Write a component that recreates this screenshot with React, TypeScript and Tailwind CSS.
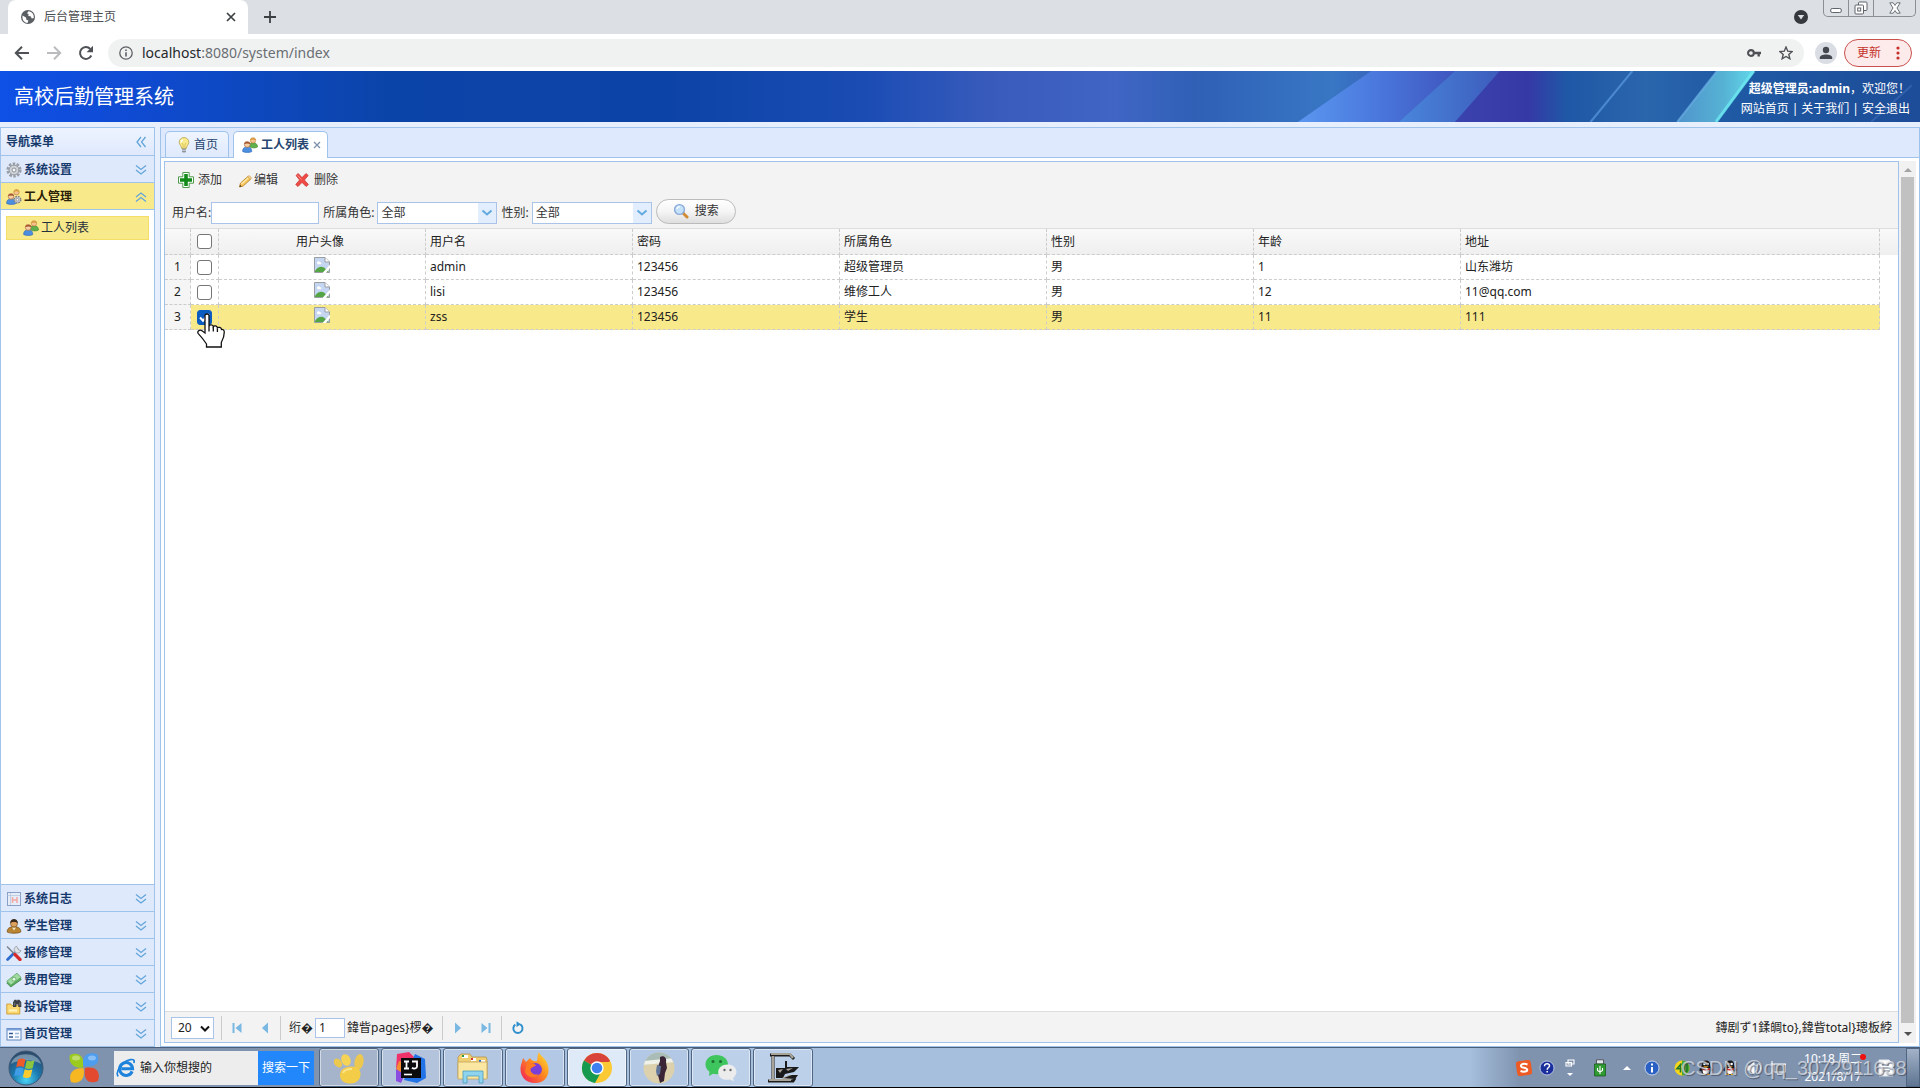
import type { ReactNode } from "react";
import clsx from "clsx";

type IconProps = {
  className?: string;
};

/* ---------- small 16px icons ---------- */

function GlobeIcon({ className }: IconProps) {
  return (
    <svg viewBox="0 0 16 16" className={clsx("h-4 w-4 shrink-0", className)}>
      <circle cx="8" cy="8" r="7" fill="#5b5f64" />
      <path d="M2.5 6.5 6 8.6l.4 2.2 2 .8-.9 2.4C4 13.5 2 11 2.5 6.5Z" fill="#fff" />
      <path d="M8.5 2.2 7 4.2l1.6.8-.3 1.9 2.3.4 1.2 2.1 2-.5C14 5 12 2.5 8.5 2.2Z" fill="#fff" />
    </svg>
  );
}

function BulbIcon({ className }: IconProps) {
  return (
    <svg viewBox="0 0 16 16" className={clsx("h-4 w-4 shrink-0", className)}>
      <path d="M8 .5a4.8 4.8 0 0 0-4.800 4.800c0 2.400 2.300 3.600 2.500 6.200h4.600c.2-2.600 2.500-3.800 2.500-6.200A4.800 4.800 0 0 0 8 .5Z" fill="#f8ea8a" stroke="#b9a54a" strokeWidth=".8" />
      <path d="M7 3c-1.400.3-2 1.200-2 2.500" stroke="#fff" fill="none" strokeWidth="1.300" />
      <path d="M7 11V7.500L6 6M9 11V7.500l1-1.500" stroke="#d2b94c" fill="none" strokeWidth=".8" />
      <rect x="6" y="11.5" width="4" height="4" rx="1" fill="#8f979f" />
      <path d="M6 13.200h4" stroke="#dfe3e8" strokeWidth=".8" />
    </svg>
  );
}

function UsersIcon({ className }: IconProps) {
  return (
    <svg viewBox="0 0 16 16" className={clsx("h-4 w-4 shrink-0", className)}>
      <path d="M6.800 9.300c0-2.400 1.600-3.600 4.200-3.600s4.500 1.200 4.500 4.300c-1.500 1.200-6 1.500-8.700-.7Z" fill="#5fb04a" stroke="#3f8a31" strokeWidth=".6" />
      <circle cx="11" cy="3.400" r="2.700" fill="#f3c28e" stroke="#b67a35" strokeWidth=".6" />
      <path d="M8.200 3.200C8.500.7 13.500.5 13.800 3.200 12.500 2.300 9.800 2.400 8.200 3.200Z" fill="#d9952f" />
      <path d="M.6 14.500c0-3.200 1.500-4.600 4.600-4.600s4.600 1.400 4.600 4.600c-1.500 1.300-7.200 1.300-9.200 0Z" fill="#4c8fe0" stroke="#2b64b4" strokeWidth=".6" />
      <circle cx="5.200" cy="7.400" r="2.900" fill="#f6cfa4" stroke="#a25f35" strokeWidth=".6" />
      <path d="M2.200 7.200c.2-3 5.800-3.200 6 0C6.800 6.200 3.800 6.200 2.200 7.200Z" fill="#a4532b" />
    </svg>
  );
}

function UsersGearIcon({ className }: IconProps) {
  return (
    <svg viewBox="0 0 16 16" className={clsx("h-4 w-4 shrink-0", className)}>
      <circle cx="10.500" cy="3.200" r="2.700" fill="#f3c28e" stroke="#b67a35" strokeWidth=".6" />
      <path d="M7.700 3C8 .5 13 .3 13.300 3 12 2.100 9.300 2.200 7.700 3Z" fill="#e0a132" />
      <path d="M.6 14.500c0-3.200 1.500-4.600 4.600-4.600s4.600 1.400 4.600 4.600c-1.500 1.300-7.200 1.300-9.200 0Z" fill="#4c8fe0" stroke="#2b64b4" strokeWidth=".6" />
      <circle cx="5" cy="7.400" r="2.800" fill="#f6cfa4" stroke="#a25f35" strokeWidth=".6" />
      <path d="M2.200 7.200c.2-3 5.600-3.200 5.800 0-1.500-1-4.300-1-5.800 0Z" fill="#a4532b" />
      <circle cx="11.500" cy="10.700" r="3.300" fill="#c3c7cc" stroke="#7d8288" strokeWidth="1.400" strokeDasharray="1.600 1" />
      <circle cx="11.500" cy="10.700" r="1.200" fill="#fff" stroke="#7d8288" strokeWidth=".6" />
    </svg>
  );
}

function GearIcon({ className }: IconProps) {
  return (
    <svg viewBox="0 0 16 16" className={clsx("h-4 w-4 shrink-0", className)}>
      <circle cx="8" cy="8" r="6.300" fill="none" stroke="#9a9fa6" strokeWidth="2.600" strokeDasharray="2.500 1.450" />
      <circle cx="8" cy="8" r="4.900" fill="#d0d3d8" stroke="#93989f" strokeWidth="1" />
      <circle cx="8" cy="8" r="2" fill="#f5f7fa" stroke="#8f949a" strokeWidth="1" />
    </svg>
  );
}

function LogIcon({ className }: IconProps) {
  return (
    <svg viewBox="0 0 16 16" className={clsx("h-4 w-4 shrink-0", className)}>
      <rect x="1.500" y="1.500" width="13" height="13" fill="#e6edf9" stroke="#8a9fc8" />
      <path d="M1.500 4.500h13M4.500 2v12" stroke="#b8c6e0" strokeWidth=".8" />
      <path d="M6.500 6v6M11 6v6M6.500 9H11" stroke="#f3a8a2" strokeWidth="1.500" />
    </svg>
  );
}

function StudentIcon({ className }: IconProps) {
  return (
    <svg viewBox="0 0 16 16" className={clsx("h-4 w-4 shrink-0", className)}>
      <path d="M1.200 14c0-3.800 2.300-5.200 6.800-5.200s6.800 1.400 6.800 5.200c-2.500 1.600-11 1.600-13.600 0Z" fill="#b98532" stroke="#7c531a" strokeWidth=".8" />
      <path d="m6 9.500 2 3 2-3Z" fill="#f4e5c5" />
      <circle cx="8" cy="5.600" r="3.500" fill="#dda15e" stroke="#5f3b16" strokeWidth=".6" />
      <path d="M4.200 5.300C3.800-.4 12.200-.4 11.800 5.300 10 3.500 6 3.500 4.200 5.300Z" fill="#3a2a1c" />
    </svg>
  );
}

function ToolsIcon({ className }: IconProps) {
  return (
    <svg viewBox="0 0 16 16" className={clsx("h-4 w-4 shrink-0", className)}>
      <path d="M12.500 3.500 7 9" stroke="#a8adb5" strokeWidth="2" />
      <path d="M10.600 1.200a3.500 3.500 0 1 0 4.400 4.400L12.800 5l-1.200-1.500Z" fill="#dfe3e8" stroke="#8b9199" strokeWidth=".7" />
      <path d="m1.600 14.400 6-6" stroke="#2d6bd0" strokeWidth="2.800" strokeLinecap="round" />
      <path d="m1 1.500 7.500 7.500" stroke="#7c838c" strokeWidth="1.500" />
      <path d="m9 9.500 5 5" stroke="#d92b2b" strokeWidth="3.200" strokeLinecap="round" />
    </svg>
  );
}

function MoneyIcon({ className }: IconProps) {
  return (
    <svg viewBox="0 0 16 16" className={clsx("h-4 w-4 shrink-0", className)}>
      <path d="m.8 11 4 4 10.500-7.500L11.500 3Z" fill="#5cae60" stroke="#34803a" strokeWidth=".7" />
      <path d="m.8 9.200 4 4 10.200-7.800-4-4.200Z" fill="#a2dba2" stroke="#4b9b4f" strokeWidth=".7" />
      <circle cx="8" cy="7.200" r="2" fill="#e2f6df" stroke="#4b9b4f" strokeWidth=".7" />
    </svg>
  );
}

function FolderFindIcon({ className }: IconProps) {
  return (
    <svg viewBox="0 0 16 16" className={clsx("h-4 w-4 shrink-0", className)}>
      <path d="M.8 5h4l1 1.500h8V15H.8Z" fill="#fbd870" stroke="#c79323" strokeWidth=".8" />
      <path d="M3 10.500h8v2H3Z" fill="#fff3c0" />
      <path d="M7 8V3.200L8.500.8h2l.5 1.500.4-1.500h2l1.900 2.400V8h-3V5.500h-2V8Z" fill="#3c3f45" />
      <path d="M8.700 3.500v3M13.800 3.500v3" stroke="#8c9199" strokeWidth=".7" />
    </svg>
  );
}

function PageFormIcon({ className }: IconProps) {
  return (
    <svg viewBox="0 0 16 16" className={clsx("h-4 w-4 shrink-0", className)}>
      <rect x="1" y="2.500" width="14" height="11.500" fill="#f7faff" stroke="#5f86bd" />
      <path d="M1 3.500h14" stroke="#7aa1d8" strokeWidth="2" />
      <path d="M3 7.500h4M3 11h4" stroke="#34598f" strokeWidth="1.400" />
      <path d="M9 7.500h4M9 11h4" stroke="#9bb4d6" strokeWidth="1.400" />
    </svg>
  );
}

function AddIcon({ className }: IconProps) {
  return (
    <svg viewBox="0 0 16 16" className={clsx("h-4 w-4 shrink-0", className)}>
      <path d="M4.800.5h6.400v4.300h4.300v6.400h-4.300v4.300H4.800v-4.300H.5V4.800h4.300Z" fill="#fff" stroke="#4f9a4b" strokeLinejoin="round" />
      <path d="M6.200 2h3.600v4.200H14v3.600H9.800V14H6.200V9.800H2V6.200h4.200Z" fill="#118a18" />
    </svg>
  );
}

function PencilIcon({ className }: IconProps) {
  return (
    <svg viewBox="0 0 16 16" className={clsx("h-4 w-4 shrink-0", className)}>
      <path d="m1.500 15 1-4L9.600 4.700c1.500-.8 3.600 1.200 2.800 2.800L5.200 14Z" fill="#f7c65b" stroke="#b87e25" strokeWidth=".8" />
      <path d="M3.500 12 10.300 5.800" stroke="#fdeab0" strokeWidth="1.200" />
      <path d="m9.700 4.600 2.900 2.800.6-1.200c.2-1.200-1.300-2.500-2.500-2.400Z" fill="#f5dba2" stroke="#b87e25" strokeWidth=".5" />
      <path d="m1.500 15 .6-2.200 1.500 1.600Z" fill="#4d3a1f" />
    </svg>
  );
}

function RemoveIcon({ className }: IconProps) {
  return (
    <svg viewBox="0 0 16 16" className={clsx("h-4 w-4 shrink-0", className)}>
      <path d="m2 3.500 2.200-2L8 5.600l4-4.100 2.200 2L10.400 8l4 4.500-2.300 2L8 10.400l-4 4.100-2.300-2L5.600 8Z" fill="#ee4b46" stroke="#c9312d" strokeWidth=".7" />
      <path d="m3.500 3.400 3.800 4" stroke="#ff9d97" strokeWidth=".9" />
    </svg>
  );
}

function SearchIcon({ className }: IconProps) {
  return (
    <svg viewBox="0 0 16 16" className={clsx("h-4 w-4 shrink-0", className)}>
      <path d="m10 10 4 4" stroke="#d18b34" strokeWidth="3" strokeLinecap="round" />
      <circle cx="6.500" cy="6.500" r="4.900" fill="#c4e2fa" stroke="#8ba9d8" strokeWidth="1.400" />
      <path d="M4 6c.3-1.600 1.300-2.400 2.700-2.400" stroke="#fff" strokeWidth="1.300" fill="none" />
    </svg>
  );
}

function BrokenImageIcon({ className }: IconProps) {
  return (
    <svg viewBox="0 0 16 16" className={clsx("h-4 w-4 shrink-0", className)}>
      <path d="M.5.500h10.500l4.500 4.500v10.500H.5Z" fill="#c5d6f2" />
      <path d="M3 6c0-2 2.600-2.200 3-.7 1.600-.2 2 1.600.6 2H3.500Z" fill="#fff" />
      <path d="M1 15v-1c2.500-4 6-5 9-3.500L15 15Z" fill="#54a545" />
      <path d="M.5.5h10.500l4.500 4.500v10.500H.5Z" fill="none" stroke="#9a9da1" />
      <path d="M11 .5V5h4.500" fill="#fff" stroke="#9a9da1" />
      <path d="M8.500 16 16 7.500V11l-4 5Z" fill="#fff" />
    </svg>
  );
}

function DoubleChevron({ className }: IconProps) {
  return (
    <svg viewBox="0 0 12 12" fill="none" stroke="#62a5da" strokeWidth="1.300" className={clsx("h-3 w-3 shrink-0", className)}>
      <path d="m1 1.500 5 4 5-4M1 6l5 4 5-4" />
    </svg>
  );
}

/* ---------- browser chrome ---------- */

function WindowButtons() {
  return (
    <div className="flex h-[17px] self-start rounded-b-[5px] border border-t-0 border-[#8b8f94]">
      <button aria-label="最小化" className="grid w-[25px] place-items-center border-r border-[#8b8f94]">
        <svg viewBox="0 0 12 12" className="h-3 w-3">
          <rect x=".7" y="6.500" width="10.600" height="4" rx="1.500" fill="#fff" stroke="#5f646a" />
        </svg>
      </button>
      <button aria-label="还原" className="grid w-[25px] place-items-center border-r border-[#8b8f94]">
        <svg viewBox="0 0 14 14" className="h-3.5 w-3.5" fill="#fff" stroke="#5f646a">
          <rect x="4.500" y="1" width="8.500" height="8.500" rx="1" />
          <rect x="1" y="4" width="8.500" height="9" rx="1" />
          <rect x="3.700" y="7" width="3" height="3" />
        </svg>
      </button>
      <button aria-label="关闭窗口" className="grid w-[41px] place-items-center">
        <svg viewBox="0 0 12 12" className="h-3 w-3">
          <path d="M.8.8h3.400L6 3.400 7.800.8h3.400L8 6l3.200 5.200H7.800L6 8.600l-1.800 2.600H.8L4 6Z" fill="#fff" stroke="#5f646a" strokeWidth=".9" />
        </svg>
      </button>
    </div>
  );
}

function TabStrip() {
  return (
    <div className="flex h-[34px] shrink-0 bg-[#dcdfe4] pl-2 pr-1">
      <div className="flex w-60 items-center rounded-t-lg bg-white px-3">
        <GlobeIcon />
        <span className="ml-2 flex-1 text-xs leading-4 text-[#4a4d51]">后台管理主页</span>
        <button aria-label="关闭标签页">
          <svg viewBox="0 0 10 10" className="h-2.5 w-2.5" stroke="#3c4043" strokeWidth="1.700">
            <path d="m1 1 8 8M9 1 1 9" />
          </svg>
        </button>
      </div>
      <button aria-label="新标签页" className="ml-4">
        <svg viewBox="0 0 12 12" className="h-3 w-3" stroke="#3c4043" strokeWidth="1.800">
          <path d="M6 0v12M0 6h12" />
        </svg>
      </button>
      <div className="flex-1" />
      <button aria-label="搜索标签页" className="mr-[15px]">
        <svg viewBox="0 0 14 14" className="h-3.5 w-3.5">
          <circle cx="7" cy="7" r="7" fill="#35383c" />
          <path d="M3.800 5h6.400L7 9.600Z" fill="#dcdfe4" />
        </svg>
      </button>
      <WindowButtons />
    </div>
  );
}

function Toolbar() {
  return (
    <div className="flex h-[37px] shrink-0 items-center bg-white pl-3.5 pr-2">
      <button aria-label="后退" className="mr-4">
        <svg viewBox="0 0 16 16" className="h-4 w-4" fill="none" stroke="#4e5256" strokeWidth="2">
          <path d="M15 8H2.500M8 1.800 1.800 8 8 14.200" />
        </svg>
      </button>
      <button aria-label="前进" className="mr-4">
        <svg viewBox="0 0 16 16" className="h-4 w-4" fill="none" stroke="#babcbe" strokeWidth="2">
          <path d="M1 8h12.500M8 1.800 14.200 8 8 14.200" />
        </svg>
      </button>
      <button aria-label="重新加载" className="mr-3.5">
        <svg viewBox="0 0 16 16" className="h-4 w-4">
          <path d="M13.300 10.500A5.900 5.900 0 1 1 12.300 4" fill="none" stroke="#4e5256" strokeWidth="2" />
          <path d="M15 .8v6.400H8.600Z" fill="#4e5256" />
        </svg>
      </button>
      <div className="flex h-7 flex-1 items-center rounded-full bg-[#f0f2f2] px-[11px]">
        <svg viewBox="0 0 14 14" className="h-3.5 w-3.5" fill="none" stroke="#5b5f64" strokeWidth="1.300">
          <circle cx="7" cy="7" r="6.200" />
          <path d="M7 6.200v4.300M7 3.400v1.500" strokeWidth="1.600" />
        </svg>
        <div className="ml-[9px] flex-1 text-sm leading-5 text-[#6a6e73]">
          <span className="text-[#25282b]">localhost</span>:8080/system/index
        </div>
        <button aria-label="密码" className="mr-[18px]">
          <svg viewBox="0 0 16 16" className="h-3.5 w-3.5">
            <circle cx="4.500" cy="8" r="3.300" fill="none" stroke="#4e5256" strokeWidth="2.400" />
            <path d="M8 6.700h8v2.600h-1.300V12H12V9.300H8Z" fill="#4e5256" />
          </svg>
        </button>
        <button aria-label="收藏">
          <svg viewBox="0 0 16 16" className="h-3.5 w-3.5" fill="none" stroke="#4e5256" strokeWidth="1.600">
            <path d="m8 1.200 2 4.700 5 .4-3.800 3.300 1.200 5L8 12l-4.400 2.600 1.200-5L1 6.300l5-.4Z" />
          </svg>
        </button>
      </div>
      <button aria-label="用户" className="ml-[11px] mr-[7px] grid h-[22px] w-[22px] place-items-center rounded-full bg-[#dadde4]">
        <svg viewBox="0 0 14 14" className="h-3.5 w-3.5" fill="#45494f">
          <circle cx="7" cy="4" r="3.200" />
          <path d="M.8 13v-1.500C.8 9.500 4 8.400 7 8.400s6.200 1.100 6.200 3.100V13Z" />
        </svg>
      </button>
      <button className="flex h-7 items-center rounded-full border border-[#c9504c] bg-[#fcebea] pl-3 pr-[11px] text-xs leading-4 text-[#c5302b]">
        更新
        <svg viewBox="0 0 4 14" className="ml-[15px] h-3.5 w-1" fill="#c5302b">
          <circle cx="2" cy="2" r="1.600" />
          <circle cx="2" cy="7" r="1.600" />
          <circle cx="2" cy="12" r="1.600" />
        </svg>
      </button>
    </div>
  );
}

/* ---------- banner ---------- */

function BannerArt() {
  return (
    <svg viewBox="0 0 1920 50" preserveAspectRatio="xMaxYMid slice" className="absolute inset-0 h-full w-full" aria-hidden="true">
      <defs>
        <linearGradient id="base">
          <stop offset="0" stopColor="#0e52ec" />
          <stop offset=".08" stopColor="#0f4bd4" />
          <stop offset=".22" stopColor="#0b44a8" />
          <stop offset=".36" stopColor="#0c43a6" />
          <stop offset=".46" stopColor="#1a4cb4" />
          <stop offset=".53" stopColor="#3a5cbc" />
          <stop offset=".59" stopColor="#4065c4" />
          <stop offset=".63" stopColor="#2f60b6" />
          <stop offset=".7" stopColor="#3877c4" />
          <stop offset=".77" stopColor="#3a40ac" />
          <stop offset=".8" stopColor="#3539a6" />
          <stop offset=".82" stopColor="#1f58a6" />
          <stop offset=".86" stopColor="#2a66ac" />
          <stop offset=".9" stopColor="#1f5aa4" />
          <stop offset="1" stopColor="#1d4c98" />
        </linearGradient>
        <linearGradient id="wedge">
          <stop offset="0" stopColor="#5a97f0" />
          <stop offset=".5" stopColor="#4a78dc" />
          <stop offset="1" stopColor="#3f56bf" />
        </linearGradient>
        <linearGradient id="band">
          <stop offset="0" stopColor="#4a86dc" />
          <stop offset="1" stopColor="#3c5cbc" />
        </linearGradient>
        <linearGradient id="cyan">
          <stop offset="0" stopColor="#4f94cc" />
          <stop offset=".6" stopColor="#56b2d4" />
          <stop offset="1" stopColor="#62d8ea" />
        </linearGradient>
      </defs>
      <rect width="1920" height="50" fill="url(#base)" />
      <path d="M1382 0h82l-55 50h-99Z" fill="url(#wedge)" />
      <path d="M1464 0h44l-44 50h-55Z" fill="url(#band)" />
      <path d="m1638 0-41 50" stroke="#5b9be0" strokeWidth="2" opacity=".7" />
      <path d="M1721 0h37l-37 50h-39Z" fill="url(#cyan)" />
      <path d="m1757 0-37 50" stroke="#6deaf2" strokeWidth="3" opacity=".8" />
      <path d="m1721 0-39 50" stroke="#6bb0e6" strokeWidth="2" opacity=".7" />
      <path d="m1912 14-40 36" stroke="#3d6db8" strokeWidth="2" opacity=".6" />
    </svg>
  );
}

function Banner() {
  return (
    <header className="relative flex h-[51px] shrink-0 items-center justify-between overflow-hidden bg-[#1d4c98] text-white">
      <BannerArt />
      <h1 className="relative pl-3.5 text-xl leading-6">高校后勤管理系统</h1>
      <div className="relative pr-2.5 pt-1 text-right text-xs leading-5">
        <p>
          <b>超级管理员:admin</b>，欢迎您！
        </p>
        <p className="flex justify-end gap-[3px]">
          <a href="#home">网站首页</a>|<a href="#about">关于我们</a>|<a href="#logout">安全退出</a>
        </p>
      </div>
    </header>
  );
}

/* ---------- sidebar ---------- */

type MenuHeaderProps = {
  icon: ReactNode;
  label: string;
  open?: boolean;
};

function MenuHeader({ icon, label, open }: MenuHeaderProps) {
  return (
    <button
      className={clsx(
        "flex h-[27px] w-full shrink-0 items-center border-b border-[#9fc3ea] pl-[5px] pr-[7px] pt-px text-left text-xs font-bold leading-4",
        open ? "bg-[#f8e98a] text-[#2a2208]" : "bg-[#dfe9fc] text-[#173a6d]",
      )}
    >
      {icon}
      <span className="ml-0.5 flex-1">{label}</span>
      <DoubleChevron className={open ? "rotate-180" : undefined} />
    </button>
  );
}

const bottomMenu = [
  { label: "系统日志", icon: <LogIcon /> },
  { label: "学生管理", icon: <StudentIcon /> },
  { label: "报修管理", icon: <ToolsIcon /> },
  { label: "费用管理", icon: <MoneyIcon /> },
  { label: "投诉管理", icon: <FolderFindIcon /> },
  { label: "首页管理", icon: <PageFormIcon /> },
];

function Sidebar() {
  return (
    <nav className="flex w-[155px] shrink-0 flex-col border border-b-0 border-[#9fc3ea] bg-white">
      <div className="flex h-7 shrink-0 items-center border-b border-[#9fc3ea] bg-gradient-to-b from-[#eef4ff] to-[#dfe9fc] pl-[5px] pr-[7px] pt-px text-xs font-bold leading-4 text-[#173a6d]">
        <span className="flex-1">导航菜单</span>
        <DoubleChevron className="rotate-90" />
      </div>
      <MenuHeader icon={<GearIcon />} label="系统设置" />
      <MenuHeader icon={<UsersGearIcon />} label="工人管理" open />
      <div className="flex-1 px-[5px] py-1.5">
        <a href="#workers" className="flex h-6 items-center border border-[#f3de67] bg-[#f8e98a] pl-4 text-xs leading-4 text-[#26303c]">
          <UsersIcon />
          <span className="ml-0.5">工人列表</span>
        </a>
      </div>
      <div className="border-t border-[#9fc3ea]">
        {bottomMenu.map((item) => (
          <MenuHeader key={item.label} icon={item.icon} label={item.label} />
        ))}
      </div>
    </nav>
  );
}

/* ---------- worker list ---------- */

function TabBar() {
  return (
    <div className="flex h-[30px] shrink-0 items-end gap-1 border-b border-[#9fc3ea] bg-[#dfe9fd] pl-1 text-xs leading-4 text-[#26456f]">
      <button className="flex h-[26px] items-center rounded-t-[5px] border border-b-0 border-[#9fc3ea] bg-gradient-to-b from-[#eff5ff] to-[#dfe9fd] px-2.5">
        <BulbIcon />
        <span className="ml-0.5">首页</span>
      </button>
      <div className="-mb-px flex h-[27px] items-center rounded-t-[5px] border border-b-0 border-[#9fc3ea] bg-white pl-2 pr-1.5 font-bold">
        <button className="flex items-center">
          <UsersIcon />
          <span className="ml-[3px]">工人列表</span>
        </button>
        <button aria-label="关闭" className="ml-1">
          <svg viewBox="0 0 8 8" className="h-2 w-2" stroke="#7c90ab" strokeWidth="1.300">
            <path d="m1 1 6 6M7 1 1 7" />
          </svg>
        </button>
      </div>
    </div>
  );
}

type ComboProps = {
  id: string;
  label: string;
};

function Combo({ id, label }: ComboProps) {
  return (
    <div className="flex items-center">
      <label htmlFor={id}>{label}</label>
      <div className="relative ml-[3px]">
        <select id={id} className="block h-[22px] w-[120px] appearance-none border border-[#a9c4e8] bg-white pl-[3px] outline-none">
          <option>全部</option>
        </select>
        <span className="pointer-events-none absolute inset-y-px right-px grid w-[18px] place-items-center bg-[#e2edfd]">
          <svg viewBox="0 0 12 8" className="h-2 w-3" fill="none" stroke="#62abe0" strokeWidth="2">
            <path d="m1.500 1.500 4.500 4 4.500-4" />
          </svg>
        </span>
      </div>
    </div>
  );
}

function GridToolbar() {
  return (
    <div className="flex shrink-0 flex-col bg-[#f3f3f3] text-xs leading-4 text-[#333]">
      <div className="flex h-9 items-center gap-4 pl-[13px]">
        <button className="flex items-center gap-1">
          <AddIcon />
          添加
        </button>
        <button className="flex items-center">
          <PencilIcon />
          编辑
        </button>
        <button className="flex items-center gap-1">
          <RemoveIcon />
          删除
        </button>
      </div>
      <div className="flex h-[30px] items-center gap-1 pl-[7px]">
        <div className="flex items-center">
          <label htmlFor="username">用户名:</label>
          <input id="username" type="text" className="h-[22px] w-[108px] border border-[#a9c4e8] bg-white px-1 outline-none" />
        </div>
        <Combo id="role" label="所属角色:" />
        <Combo id="sex" label="性别:" />
        <button className="mb-1 flex h-[25px] w-20 items-center justify-center gap-1.5 rounded-full border border-[#bbb] bg-gradient-to-b from-white via-[#f5f5f5] to-[#dedede]">
          <SearchIcon />
          搜索
        </button>
      </div>
    </div>
  );
}

const columns = ["用户名", "密码", "所属角色", "性别", "年龄", "地址"];

const rows = [
  { cells: ["admin", "123456", "超级管理员", "男", "1", "山东潍坊"], selected: false },
  { cells: ["lisi", "123456", "维修工人", "男", "12", "11@qq.com"], selected: false },
  { cells: ["zss", "123456", "学生", "男", "11", "111"], selected: true },
];

function RowCheck({ label, checked }: { label: string; checked?: boolean }) {
  return (
    <span className="relative mx-auto block h-[15px] w-[15px]">
      <input
        type="checkbox"
        aria-label={label}
        defaultChecked={checked}
        className="peer block h-[15px] w-[15px] appearance-none rounded-[3px] border border-[#767676] bg-white checked:border-[#0b5cc0] checked:bg-[#0b5cc0]"
      />
      <svg viewBox="0 0 15 15" className="pointer-events-none absolute inset-0 hidden peer-checked:block" fill="none" stroke="#fff" strokeWidth="2">
        <path d="m3 7.500 3 3.200L12 4" />
      </svg>
    </span>
  );
}

function HandCursor({ className }: IconProps) {
  return (
    <svg viewBox="0 0 28 36" className={className} aria-hidden="true">
      <path
        d="M8 2.500C8 .5 12 .5 12 2.500V13c.4-1.500 4-1.500 4.300.6.800-1.300 3.900-.9 4.100 1.200 1-1 4-.4 4.100 1.700.9-.4 2.800.4 2.800 2.500 0 5-1.300 7.500-3 10.500v4.500H9.500V31C7.500 28 5 24.500 1.300 20.600-.2 18.600 2.500 16 5 17.800L8 20Z"
        fill="#fff"
        stroke="#111"
        strokeWidth="1.300"
      />
      <path d="M12 13v5.500M16.300 14v4.500M20.400 15.500v3.500" stroke="#111" strokeWidth="1.300" />
    </svg>
  );
}

function WorkerTable() {
  const cell = "border-b border-r border-dashed border-[#ccc]";
  return (
    <div className="flex-1 border-t border-[#ddd] bg-white">
      <div className="bg-gradient-to-b from-[#f9f9f9] to-[#efefef] bg-[length:100%_26px] bg-no-repeat pr-[18px]">
        <table className="w-full table-fixed border-separate border-spacing-0 text-xs leading-4 text-[#222]">
          <colgroup>
            <col className="w-[26px]" />
            <col className="w-7" />
            <col className="w-[207px]" />
            <col className="w-[207px]" />
            <col className="w-[207px]" />
            <col className="w-[207px]" />
            <col className="w-[207px]" />
            <col className="w-[207px]" />
            <col />
          </colgroup>
          <thead>
            <tr className="h-[26px] text-left">
              <th className={cell} aria-label="序号" />
              <th className={cell}>
                <RowCheck label="全选" />
              </th>
              <th className={clsx(cell, "pr-1 text-center font-normal")}>用户头像</th>
              {columns.map((name) => (
                <th key={name} className={clsx(cell, "px-1 font-normal")}>
                  {name}
                </th>
              ))}
            </tr>
          </thead>
          <tbody>
            {rows.map((row, i) => (
              <tr key={row.cells[0]} className={clsx("h-[25px]", row.selected ? "bg-[#f8e98a]" : "bg-white")}>
                <td className={clsx(cell, "bg-[#f5f5f5] text-center")}>{i + 1}</td>
                <td className={clsx(cell, "relative")}>
                  <RowCheck label={row.cells[0]} checked={row.selected} />
                  {row.selected && <HandCursor className="absolute left-1.5 top-2 z-10 h-9 w-7" />}
                </td>
                <td className={cell}>
                  <BrokenImageIcon className="mx-auto mb-1" />
                </td>
                {row.cells.map((value, j) => (
                  <td key={columns[j]} className={clsx(cell, "px-1")}>
                    {value}
                  </td>
                ))}
              </tr>
            ))}
          </tbody>
        </table>
      </div>
    </div>
  );
}

function PagerButton({ label, d }: { label: string; d: string }) {
  return (
    <button aria-label={label} className="grid h-6 w-7 place-items-center">
      <svg viewBox="0 0 10 12" className="h-3 w-2.5" fill="#78b8e2">
        <path d={d} />
      </svg>
    </button>
  );
}

function Separator() {
  return <span className="h-6 w-px bg-[#ccc]" />;
}

function Pager() {
  return (
    <div className="flex h-[31px] shrink-0 items-center border-t border-[#ddd] bg-[#f3f3f3] px-1.5 pt-px text-xs leading-4 text-[#222]">
      <div className="relative mr-[7px]">
        <select aria-label="每页条数" className="block h-[22px] w-[43px] appearance-none border border-[#a9c4e8] bg-white pl-1.5 outline-none">
          <option>20</option>
        </select>
        <svg viewBox="0 0 10 8" className="pointer-events-none absolute right-1 top-2 h-2 w-2.5" fill="none" stroke="#111" strokeWidth="2">
          <path d="m1 1.500 4 4 4-4" />
        </svg>
      </div>
      <Separator />
      <span className="mx-px flex">
        <PagerButton label="首页" d="M.5 1h2v10h-2ZM9.500 1v10L3.500 6Z" />
        <PagerButton label="上一页" d="M8 .5v11L2 6Z" />
      </span>
      <Separator />
      <label htmlFor="page" className="ml-2 mr-0.5">
        绗�
      </label>
      <input id="page" type="text" defaultValue="1" className="h-5 w-[30px] border border-[#a9c4e8] bg-white px-[3px] outline-none" />
      <span className="ml-0.5 mr-2">{"鍏眥pages}椤�"}</span>
      <Separator />
      <span className="mx-px flex">
        <PagerButton label="下一页" d="M2 .5v11L8 6Z" />
        <PagerButton label="末页" d="M7.500 1h2v10h-2ZM.5 1v10L6.500 6Z" />
      </span>
      <Separator />
      <button aria-label="刷新" className="grid h-6 w-8 place-items-center">
        <svg viewBox="0 0 14 14" className="h-3.5 w-3.5">
          <path d="M4.300 3.600A4.600 4.600 0 1 0 9.200 3.400" fill="none" stroke="#2f8fcd" strokeWidth="1.900" />
          <path d="M5.500.3v5.800L10 3.200Z" fill="#2f8fcd" />
        </svg>
      </button>
      <span className="ml-auto">{"鏄剧ず1鍒皗to},鍏眥total}璁板綍"}</span>
    </div>
  );
}

function ScrollBar() {
  return (
    <div className="flex w-[17px] shrink-0 flex-col items-center bg-[#f1f1f1]" aria-hidden="true">
      <svg viewBox="0 0 8 16" className="h-4 w-2" fill="#a3a3a3">
        <path d="M0 11h8L4 7Z" />
      </svg>
      <div className="w-[13px] flex-1 bg-[#c1c1c1]" />
      <svg viewBox="0 0 8 20" className="h-5 w-2" fill="#505050">
        <path d="M0 9h8l-4 4Z" />
      </svg>
    </div>
  );
}

function Workspace() {
  return (
    <main className="flex min-w-0 flex-1 flex-col border border-[#9fc3ea] bg-white">
      <TabBar />
      <div className="flex min-h-0 flex-1 p-[3px]">
        <section className="flex min-w-0 flex-1 flex-col border border-[#9fc3ea]">
          <GridToolbar />
          <WorkerTable />
          <Pager />
        </section>
        <ScrollBar />
      </div>
    </main>
  );
}

/* ---------- taskbar ---------- */

function StartOrb() {
  return (
    <svg viewBox="0 0 36 36" className="h-9 w-9">
      <defs>
        <radialGradient id="orb" cx=".5" cy=".85" r=".8">
          <stop offset="0" stopColor="#49d2f4" />
          <stop offset=".5" stopColor="#1b78ae" />
          <stop offset="1" stopColor="#2c4b6b" />
        </radialGradient>
      </defs>
      <circle cx="18" cy="18" r="17" fill="url(#orb)" stroke="#3d5875" />
      <path d="M3 14C6 1 30 1 33 14c-8-5-22-5-30 0Z" fill="#fff" opacity=".35" />
      <path d="M10 9.500c3-1.500 5-1.400 7.500 0l-1.800 7.700c-2.500-1.400-4.700-1.400-7.500 0Z" fill="#ee5b2b" />
      <path d="M18.800 10.200c2.600 1.400 5 1.300 7.700 0l-1.800 7.700c-2.800 1.300-5 1.300-7.700 0Z" fill="#8cc63e" />
      <path d="M7.900 18.500c2.800-1.500 5-1.400 7.500 0l-1.800 7.700c-2.500-1.400-4.700-1.400-7.500 0Z" fill="#3f9de8" />
      <path d="M16.700 19.200c2.600 1.400 5 1.300 7.700 0l-1.800 7.700c-2.800 1.300-5 1.300-7.700 0Z" fill="#fccb2e" />
    </svg>
  );
}

function PetalsIcon() {
  return (
    <svg viewBox="0 0 32 32" className="h-8 w-8">
      <path d="M15 15.500C5 17 0 10 2 3c9-4 15 2 13 12.500Z" fill="#9ccb1f" />
      <path d="M15.500 14C13 4 20-1 29 2c4 8-1 14-13.500 12Z" fill="#4c9df0" />
      <path d="M15.500 16C18 27 11 33 3 30c-3-9 2-14 12.500-14Z" fill="#f6b722" />
      <path d="M17 16c11-2 16 4 13 13-9 4-15-1-13-13Z" fill="#e2492e" />
      <ellipse cx="8" cy="6" rx="4" ry="2.500" fill="#fff" opacity=".35" />
      <ellipse cx="24" cy="6" rx="4" ry="2.500" fill="#fff" opacity=".35" />
    </svg>
  );
}

function IeIcon() {
  return (
    <svg viewBox="0 0 18 18" className="h-5 w-5 shrink-0">
      <path d="M14.500 12A5.800 5.800 0 1 1 14.900 9.700H5" fill="none" stroke="#1e83dc" strokeWidth="2.800" />
      <path d="M2 16.500C-1 13 5 3 13 1.500c3-.6 4 .6 3 3" fill="none" stroke="#1e83dc" strokeWidth="1.500" />
    </svg>
  );
}

function PawIcon() {
  return (
    <svg viewBox="0 0 32 32" className="h-8 w-8">
      <ellipse cx="5" cy="11" rx="3.500" ry="5" transform="rotate(-40 5 11)" fill="#ecc84e" />
      <ellipse cx="13" cy="8" rx="4.500" ry="6" transform="rotate(-25 13 8)" fill="#f5d357" />
      <ellipse cx="26" cy="10" rx="4.500" ry="8" transform="rotate(10 26 10)" fill="#ecc84e" />
      <path d="M7 23c0-6 5-8 11-8.500s10 3 9.500 8.500-5 8.500-9.500 8.500S7 30 7 23Z" fill="#f3cc48" />
      <path d="M10 21c1-3 5-4 9-4" stroke="#fbe58c" strokeWidth="2" fill="none" />
    </svg>
  );
}

function IdeaIcon() {
  return (
    <svg viewBox="0 0 32 32" className="h-8 w-8">
      <path d="m2 2 12-2 8 8-12 14-9-5Z" fill="#f0326a" />
      <path d="m1 15 10 5-5 11-5-2Z" fill="#8a4be0" />
      <path d="m20 2 10 5 1 19-9 5-13-3Z" fill="#2272e8" />
      <path d="m4 9-3 8 8 5 2-11Z" fill="#f68b30" />
      <rect x="6" y="6" width="20" height="20" fill="#0b0b0d" />
      <path d="M9 9.500h5M11.500 9.500v7M9 16.500h5M17 9.500h5v5c0 2-3 2.800-5 1.300" stroke="#fff" strokeWidth="1.800" fill="none" />
      <path d="M9 22.500h8" stroke="#fff" strokeWidth="1.600" />
    </svg>
  );
}

function ExplorerIcon() {
  return (
    <svg viewBox="0 0 32 32" className="h-8 w-8">
      <path d="M1 5 4 2h9l2 3h14l1 2v19H1Z" fill="#f0cf72" stroke="#b7954c" strokeWidth=".8" />
      <path d="M5 3h6v3H5ZM14 6h5v3h-5ZM22 8h6v3h-6Z" fill="#fff" />
      <path d="M5 3h2v2H5Z" fill="#2b9c46" />
      <path d="M14 6h2v2h-2Z" fill="#d33a2f" />
      <path d="M22 8h2v2h-2Z" fill="#2874d0" />
      <path d="M1 10h29v17H1Z" fill="#fae7a2" stroke="#c3a558" strokeWidth=".8" />
      <path d="M6 31V19h20v12h-4v-7H10v7Z" fill="#8fd4ee" stroke="#4b9cbd" strokeWidth=".8" />
    </svg>
  );
}

function FirefoxIcon() {
  return (
    <svg viewBox="0 0 32 32" className="h-8 w-8">
      <defs>
        <linearGradient id="fox" x1="1" y1="0" x2="0" y2="1">
          <stop offset="0" stopColor="#ffe83a" />
          <stop offset=".45" stopColor="#ff8a1f" />
          <stop offset="1" stopColor="#f0145e" />
        </linearGradient>
      </defs>
      <path d="M20 0c1 4 5 5 7 9 5 8 3 22-11 22C3 31-1 19 3 10l1-4 3 4 4-4c1 2 4 4 7 3 1-3 0-6 2-9Z" fill="url(#fox)" />
      <circle cx="16.500" cy="17.500" r="6.500" fill="#7a3fd8" />
      <path d="M8 12c4-2 8-1 9 2-3 0-3 2-5 2-2 4 3 8 8 6-3 5-13 4-14-3Z" fill="#ff7a22" />
    </svg>
  );
}

function ChromeIcon() {
  return (
    <svg viewBox="0 0 32 32" className="h-8 w-8">
      <circle cx="16" cy="16" r="15" fill="#fbc934" />
      <path d="M16 16 3 8.500A15 15 0 0 1 29 8.500L28 10H16Z" fill="#d8433a" />
      <path d="M16 16 3 8.500A15 15 0 0 0 14 31l6-11Z" fill="#169a50" />
      <circle cx="16" cy="16" r="6.700" fill="#fff" />
      <circle cx="16" cy="16" r="5.300" fill="#3f80f0" />
    </svg>
  );
}

function AvatarIcon() {
  return (
    <svg viewBox="0 0 32 32" className="h-8 w-8">
      <defs>
        <clipPath id="round">
          <circle cx="16" cy="16" r="15.500" />
        </clipPath>
      </defs>
      <g clipPath="url(#round)">
        <rect width="32" height="32" fill="#dcd0ad" />
        <path d="M0 0h32v9L0 13Z" fill="#a9bdb6" />
        <path d="m0 9 32-3v4L0 13Z" fill="#f0f1e9" />
        <path d="M17 5c4-2 7 1 6 5l1 6-2 5-1 8-4 2-2-8 1-5-1-3 2-6Z" fill="#3a2436" />
        <path d="m14 13 4 1-1 8-3 2-1-5Z" fill="#62769a" />
      </g>
    </svg>
  );
}

function WechatIcon() {
  return (
    <svg viewBox="0 0 32 32" className="h-8 w-8">
      <path d="M11.500 3C5 3 .5 7 .5 12.500c0 3 1.500 5.500 4 7.300L4 24l4-2.200c7.500 1.800 15-2 15-9.300C23 7 18 3 11.500 3Z" fill="#3ec55d" />
      <path d="M22.500 12.500c-5.500 0-9.300 3.300-9.300 7.700 0 5.800 6 8.700 12 7.300l3.600 2-.7-3.500c6.500-5 3-13.500-5.600-13.500Z" fill="#ececec" />
      <circle cx="8" cy="9.500" r="1.500" fill="#1d6b33" />
      <circle cx="15.500" cy="9.500" r="1.500" fill="#1d6b33" />
      <circle cx="19.500" cy="18" r="1.200" fill="#6b6b6b" />
      <circle cx="25.500" cy="18" r="1.200" fill="#6b6b6b" />
    </svg>
  );
}

function RecorderIcon() {
  return (
    <svg viewBox="0 0 32 32" className="h-8 w-8">
      <path d="M3 3h20l4 4M6 3v25M1 29h25l2-3" fill="none" stroke="#1d1d1d" strokeWidth="3" />
      <path d="M4 2h19l3 4M6 4v23M2 28h22" fill="none" stroke="#a9a498" strokeWidth="2.200" />
      <path d="M9 16h9V9h2v6h12l-5 5-9 2-2 4H9Z" fill="#1a1a1a" />
      <path d="m11 18 5-1-3 4ZM19 17l7-1-5 3ZM15 26l7-3h9l-4 4H16Z" fill="#a9a498" />
      <path d="m17 26 8-3h6l-3 4Z" fill="#1a1a1a" />
    </svg>
  );
}

const apps = [
  { label: "桌面宠物", icon: <PawIcon />, tone: "bg-[#a5b4cb]" },
  { label: "IntelliJ IDEA", icon: <IdeaIcon />, tone: "bg-[#b3c3db]" },
  { label: "资源管理器", icon: <ExplorerIcon />, tone: "bg-[#b3c6e2]" },
  { label: "Firefox", icon: <FirefoxIcon />, tone: "bg-[#b3c8e4]" },
  { label: "Chrome", icon: <ChromeIcon />, tone: "bg-[#dfeaf8]" },
  { label: "QQ", icon: <AvatarIcon />, tone: "bg-[#b3c8e4]" },
  { label: "微信", icon: <WechatIcon />, tone: "bg-[#bcd0ea]" },
  { label: "录屏", icon: <RecorderIcon />, tone: "bg-[#bcd0ea]" },
];

function Penguin() {
  return (
    <svg viewBox="0 0 16 16" className="h-4 w-4">
      <path d="M8 .5c3 0 4.300 2 4.300 5l2.500 4.500-1 1.500-1-1c0 3-2 4.500-4.800 4.500s-4.800-1.500-4.800-4.500l-1 1-1-1.500L3.700 5.500c0-3 1.300-5 4.300-5Z" fill="#161616" />
      <ellipse cx="8" cy="11" rx="3.400" ry="3.300" fill="#fff" />
      <circle cx="6.400" cy="4" r="1.300" fill="#fff" />
      <circle cx="9.600" cy="4" r="1.300" fill="#fff" />
      <path d="M5 6.200h6L8 7.700Z" fill="#f6a51b" />
      <path d="M3.800 8c2.500 1.300 6 1.300 8.400 0v1.500c-2.500 1.200-6 1.200-8.400 0Z" fill="#e12d25" />
      <path d="M3 15h4v-1.500ZM13 15H9v-1.500Z" fill="#f6a51b" />
    </svg>
  );
}

function Tray() {
  return (
    <div className="relative flex h-full items-center text-white">
      <svg viewBox="0 0 16 16" className="h-4 w-4">
        <rect x=".5" y=".5" width="15" height="15" rx="3" fill="#ee5a24" transform="rotate(-8 8 8)" />
        <path d="M11.500 4.500C8 3.200 4.500 4 5 6.200c.5 2 6 1.300 6.200 3.500.2 2-3.700 2.600-6.700 1.300" fill="none" stroke="#fff" strokeWidth="2" />
      </svg>
      <svg viewBox="0 0 16 16" className="ml-[7px] h-4 w-4">
        <circle cx="8" cy="8" r="7" fill="#1a2f9c" stroke="#cdd8f0" strokeWidth=".8" />
        <path d="M5.500 6.300C5.500 2.600 10.800 3 10.500 6c-.2 1.500-2.300 1.700-2.300 3.700M8.200 11v1.600" fill="none" stroke="#fff" strokeWidth="1.500" />
      </svg>
      <svg viewBox="0 0 10 18" className="ml-2.5 h-[18px] w-2.5">
        <path d="M3 1h6v4H3ZM1 3.500h5.500v3.500H1Z" fill="none" stroke="#fff" strokeWidth="1.100" />
        <path d="M2 14h6l-3 3Z" fill="#fff" />
      </svg>
      <svg viewBox="0 0 14 18" className="ml-[18px] h-[18px] w-3.5">
        <path d="M3.500.8h7V5h-7Z" fill="#dfe5ea" stroke="#444" strokeWidth=".8" />
        <path d="M1.500 5h11v12h-11Z" fill="#2f9a32" stroke="#1a5e1e" strokeWidth=".8" />
        <path d="M7 7v8M4.500 9v2.500L7 13l2.500-1.500V9" fill="none" stroke="#fff" strokeWidth="1.100" />
      </svg>
      <svg viewBox="0 0 8 8" className="ml-4 h-2 w-2">
        <path d="M0 6h8L4 2Z" fill="#fff" />
      </svg>
      <svg viewBox="0 0 16 16" className="ml-[13px] h-4 w-4">
        <circle cx="8" cy="8" r="7" fill="#2a5fc4" stroke="#dfe8f8" strokeWidth=".8" />
        <path d="M8 7v5.500M8 3.500v2" stroke="#fff" strokeWidth="2" />
      </svg>
      <svg viewBox="0 0 16 16" className="ml-3.5 h-4 w-4">
        <circle cx="8" cy="8" r="7.500" fill="#f3d51c" />
        <path d="M8 .5a7.500 7.500 0 0 1 0 15Z" fill="#4da62d" />
        <path d="M7.500 3.500 3 8.800h4.500M6.500 5v7.500M10 4.500h3v7h-3Z" stroke="#1f7a28" strokeWidth="1.600" fill="none" />
      </svg>
      <span className="ml-2">
        <Penguin />
      </span>
      <span className="ml-2">
        <Penguin />
      </span>
      <svg viewBox="0 0 16 16" className="ml-2 h-4 w-4">
        <path d="M1 5.500h3L8.500 1v14L4 10.500H1Z" fill="#fff" />
        <path d="M10.500 5c1.500 1.500 1.500 4.500 0 6M12.500 3c3 3 3 7 0 10" fill="none" stroke="#fff" />
      </svg>
      <svg viewBox="0 0 16 16" className="ml-2 h-4 w-4" fill="#76818f" stroke="#fff">
        <rect x="4" y="4" width="11.500" height="8" />
        <path d="M2 1v14M.5 4h3M7 14.500h6" />
      </svg>
      <div className="relative ml-3.5 w-[66px] text-center text-xs leading-[18px]">
        <div>10:18 周二</div>
        <div>2021/8/17</div>
        <span className="absolute right-0 top-1 h-1.5 w-1.5 rounded-full bg-[#f01010]" />
      </div>
      <svg viewBox="0 0 16 18" className="ml-3 h-[18px] w-4">
        <path d="M1 1h10l4 4v12H1Z" fill="#fff" stroke="#dfe4ea" />
        <path d="M4 6h7M4 9h8M4 12h8" stroke="#5a6a80" strokeWidth="1.200" />
      </svg>
      <span className="pointer-events-none absolute inset-y-0 left-[165px] whitespace-nowrap font-['Liberation_Sans','Noto_Sans_CJK_SC',sans-serif] text-xl leading-10 text-[#e6e9ee]/70 [text-shadow:1px_1px_1px_rgba(60,70,90,0.7)]">
        CSDN @qq_3072911638
      </span>
    </div>
  );
}

function Taskbar() {
  return (
    <footer className="flex h-[41px] shrink-0 items-center border-b border-t border-b-black border-t-[#4c5f7a] bg-[linear-gradient(90deg,#8093ae_0,#8093ae_314px,#a5bfdc_440px,#a5bfdc_calc(100%_-_450px),#7f93af_calc(100%_-_400px),#7f93af_100%)]">
      <button aria-label="开始" className="ml-2">
        <StartOrb />
      </button>
      <button aria-label="导航" className="ml-6">
        <PetalsIcon />
      </button>
      <form className="ml-3.5 flex h-[34px] text-xs leading-4">
        <div className="flex w-36 items-center bg-[#ededee] pl-0.5">
          <IeIcon />
          <input aria-label="网页搜索" type="text" defaultValue="输入你想搜的" className="ml-1 w-full min-w-0 bg-transparent text-[#222] outline-none" />
        </div>
        <button type="button" className="w-14 bg-[#2187fa] text-white">
          搜索一下
        </button>
      </form>
      <div className="ml-[5px] flex h-full gap-0.5">
        {apps.map((app) => (
          <button
            key={app.label}
            aria-label={app.label}
            className={clsx("grid w-[60px] place-items-center rounded-[3px] border border-[#4f6582] shadow-[inset_0_0_0_1px_rgba(255,255,255,0.5)]", app.tone)}
          >
            {app.icon}
          </button>
        ))}
      </div>
      <div className="flex-1" />
      <Tray />
      <button aria-label="显示桌面" className="ml-3 h-full w-3.5 border border-[#4f6582] bg-gradient-to-b from-[#a3b2c8] to-[#5f7592]" />
    </footer>
  );
}

export default function App() {
  return (
    <div className="flex h-screen flex-col overflow-hidden bg-[#e6effb] font-['Noto_Sans','Noto_Sans_CJK_SC',sans-serif]">
      <TabStrip />
      <Toolbar />
      <Banner />
      <div className="flex min-h-0 flex-1 gap-[5px] pt-[5px]">
        <Sidebar />
        <Workspace />
      </div>
      <Taskbar />
    </div>
  );
}
